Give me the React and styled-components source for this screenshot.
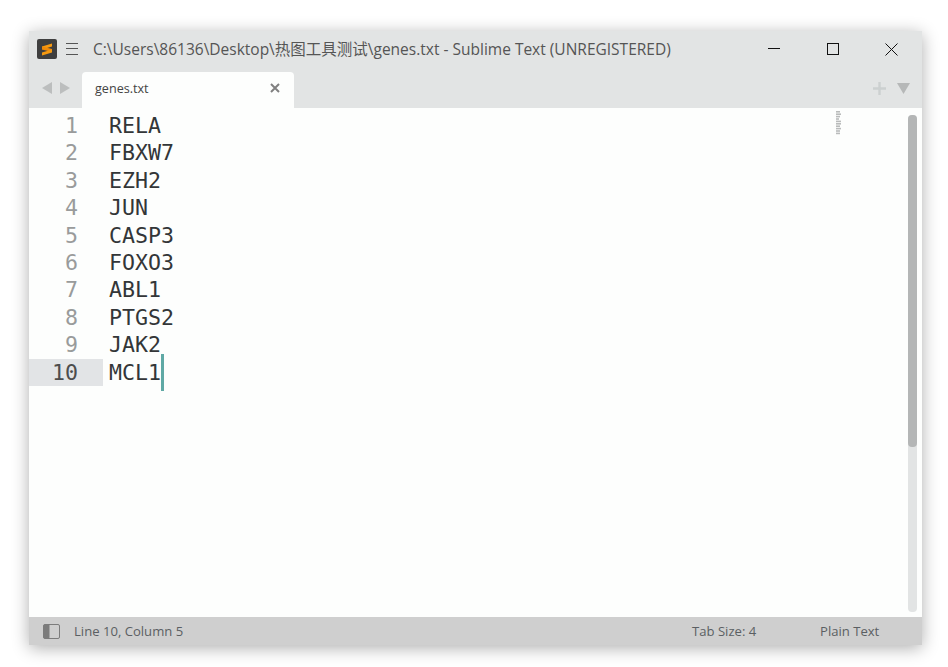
import React from "react";
import styled, { createGlobalStyle } from "styled-components";

const GlobalStyle = createGlobalStyle`
  html, body {
    margin: 0;
    padding: 0;
    background: #fff;
    height: 100%;
    overflow: hidden;
  }
`;

const uiFont = `"Open Sans", "Noto Sans CJK SC", sans-serif`;

const Page = styled.div`
  width: 948px;
  height: 667px;
  padding: 31px 26px 22px 29px;
  box-sizing: border-box;
`;

const Window = styled.div`
  height: 614px;
  display: flex;
  flex-direction: column;
  background: #fdfefd;
  box-shadow: 0 3px 16px rgba(0, 0, 0, 0.32);
  font-family: ${uiFont};
`;

const TitleBar = styled.div`
  height: 41px;
  box-sizing: border-box;
  display: flex;
  align-items: center;
  background: #e2e4e4;
  padding: 0 1px 5px 8px;
`;

const AppIcon = styled.div`
  width: 20px;
  height: 20px;
  border-radius: 2px;
  background: #3f3f3f;
  display: flex;
  align-items: center;
  justify-content: center;
`;

const MenuIcon = styled.div`
  width: 12px;
  height: 10px;
  margin-left: 9px;
  margin-top: -1px;
  border-top: 1px solid #555;
  border-bottom: 1px solid #555;
  position: relative;
  &::after {
    content: "";
    position: absolute;
    left: 0;
    right: 0;
    top: 4px;
    height: 1px;
    background: #555;
  }
`;

const Title = styled.div`
  margin-left: 15px;
  font-size: 15.5px;
  line-height: 20px;
  color: #555;
  white-space: nowrap;
  flex: 1;
`;

const WinButton = styled.div`
  width: 59px;
  height: 36px;
  display: flex;
  align-items: center;
  justify-content: center;
`;

const TabBar = styled.div`
  height: 36px;
  display: flex;
  align-items: flex-start;
  background: #e2e4e4;
  padding-left: 13px;
`;

const Arrows = styled.div`
  width: 40px;
  height: 32px;
  display: flex;
  gap: 6px;
  align-items: center;
`;

const Tab = styled.div`
  width: 212px;
  height: 36px;
  box-sizing: border-box;
  padding: 0 14px 4px 13px;
  display: flex;
  align-items: center;
  justify-content: space-between;
  background: #fdfefd;
  border-radius: 4px 4px 0 0;
  font-size: 12.6px;
  color: #444;
`;

const TabTools = styled.div`
  margin-left: auto;
  height: 32px;
  display: flex;
  align-items: center;
  gap: 11px;
  padding-right: 12px;
`;

const Editor = styled.div`
  flex: 1;
  display: flex;
  position: relative;
  padding-top: 4px;
  min-height: 0;
  background: #fdfefd;
`;

const Gutter = styled.div`
  width: 74px;
`;

const LineNumber = styled.div`
  height: 27.4px;
  line-height: 27.4px;
  box-sizing: border-box;
  padding-right: 25px;
  text-align: right;
  font-family: "DejaVu Sans Mono", monospace;
  font-size: 21.6px;
  color: ${(p) => (p.$active ? "#4c4c4c" : "#999b9b")};
  background: ${(p) => (p.$active ? "#e2e4e6" : "transparent")};
`;

const Code = styled.div`
  margin-left: 6px;
  font-family: "DejaVu Sans Mono", monospace;
  font-size: 21.6px;
  color: #333638;
`;

const CodeLine = styled.div`
  height: 27.4px;
  line-height: 27.4px;
  white-space: pre;
  display: flex;
`;

const Caret = styled.span`
  display: inline-block;
  width: 3px;
  height: 37px;
  margin-top: -5px;
  background: #5fa9a5;
`;

const Minimap = styled.svg`
  position: absolute;
  left: 807px;
  top: 3px;
`;

const ScrollTrack = styled.div`
  position: absolute;
  left: 879px;
  top: 7px;
  bottom: 5px;
  width: 9px;
  border-radius: 4px;
  background: #e2e4e4;
`;

const ScrollThumb = styled.div`
  height: 332px;
  border-radius: 4px;
  background: #b4b6b6;
`;

const StatusBar = styled.div`
  height: 28px;
  display: flex;
  align-items: center;
  background: #cfcfcf;
  padding-left: 14px;
  font-size: 13.1px;
  color: #5b5f63;
`;

const StatusLeft = styled.span`
  margin-left: 14px;
  flex: 1;
`;

const StatusItem = styled.span`
  width: ${(p) => p.$width}px;
  white-space: nowrap;
`;

const lines = ["RELA", "FBXW7", "EZH2", "JUN", "CASP3", "FOXO3", "ABL1", "PTGS2", "JAK2", "MCL1"];
const minimapWidths = [4, 5, 4, 3, 5, 5, 4, 5, 4, 4];

export default function App() {
  return (
    <Page>
      <GlobalStyle />
      <Window>
        <TitleBar>
          <AppIcon>
            <svg width="14" height="14" viewBox="0 0 14 14">
              <path d="M2 4.5 L12 1.5 V4.5 L2 7.5 Z" fill="#f79a10" />
              <path d="M2 4.5 L12 7 V10 L2 7.5 Z" fill="#f08a08" />
              <path d="M2 10.5 L12 7.5 V10.5 L2 13.5 Z" fill="#f79a10" />
            </svg>
          </AppIcon>
          <MenuIcon />
          <Title>C:\Users\86136\Desktop\热图工具测试\genes.txt - Sublime Text (UNREGISTERED)</Title>
          <WinButton>
            <svg width="12" height="12" viewBox="0 0 12 12">
              <path d="M0 5.5 H12" stroke="#111" strokeWidth="1" />
            </svg>
          </WinButton>
          <WinButton>
            <svg width="12" height="12" viewBox="0 0 12 12">
              <rect x="0.5" y="0.5" width="11" height="11" fill="none" stroke="#111" />
            </svg>
          </WinButton>
          <WinButton>
            <svg width="13" height="13" viewBox="0 0 13 13">
              <path d="M0.5 0.5 L12.5 12.5 M12.5 0.5 L0.5 12.5" stroke="#111" strokeWidth="1" />
            </svg>
          </WinButton>
        </TitleBar>
        <TabBar>
          <Arrows>
            <svg width="11" height="12" viewBox="0 0 11 12">
              <path d="M10 0 V12 L0 6 Z" fill="#bcbebe" />
            </svg>
            <svg width="11" height="12" viewBox="0 0 11 12">
              <path d="M1 0 V12 L11 6 Z" fill="#bcbebe" />
            </svg>
          </Arrows>
          <Tab>
            genes.txt
            <svg width="10" height="10" viewBox="0 0 10 10">
              <path d="M1 1 L9 9 M9 1 L1 9" stroke="#808080" strokeWidth="2" />
            </svg>
          </Tab>
          <TabTools>
            <svg width="13" height="13" viewBox="0 0 13 13">
              <path d="M6.5 0 V13 M0 6.5 H13" stroke="#ccd0d0" strokeWidth="2.4" />
            </svg>
            <svg width="13" height="11" viewBox="0 0 13 11">
              <path d="M0 0 H13 L6.5 11 Z" fill="#b6b8b8" />
            </svg>
          </TabTools>
        </TabBar>
        <Editor>
          <Gutter>
            {lines.map((_, i) => (
              <LineNumber key={i} $active={i === 9}>{i + 1}</LineNumber>
            ))}
          </Gutter>
          <Code>
            {lines.map((line, i) => (
              <CodeLine key={line}>
                {line}
                {i === 9 && <Caret />}
              </CodeLine>
            ))}
          </Code>
          <Minimap width="5" height="24" viewBox="0 0 5 24">
            {minimapWidths.map((w, i) => (
              <rect key={i} x="0" y={i * 2.4} width={w} height="1.6" fill="#b9bbbb" />
            ))}
          </Minimap>
          <ScrollTrack>
            <ScrollThumb />
          </ScrollTrack>
        </Editor>
        <StatusBar>
          <svg width="17" height="15" viewBox="0 0 17 15">
            <rect x="0.5" y="0.5" width="16" height="14" rx="1.5" fill="none" stroke="#7c7c7c" />
            <rect x="0.5" y="0.5" width="6" height="14" rx="1" fill="#7c7c7c" />
          </svg>
          <StatusLeft>Line 10, Column 5</StatusLeft>
          <StatusItem $width={128}>Tab Size: 4</StatusItem>
          <StatusItem $width={102}>Plain Text</StatusItem>
        </StatusBar>
      </Window>
    </Page>
  );
}
